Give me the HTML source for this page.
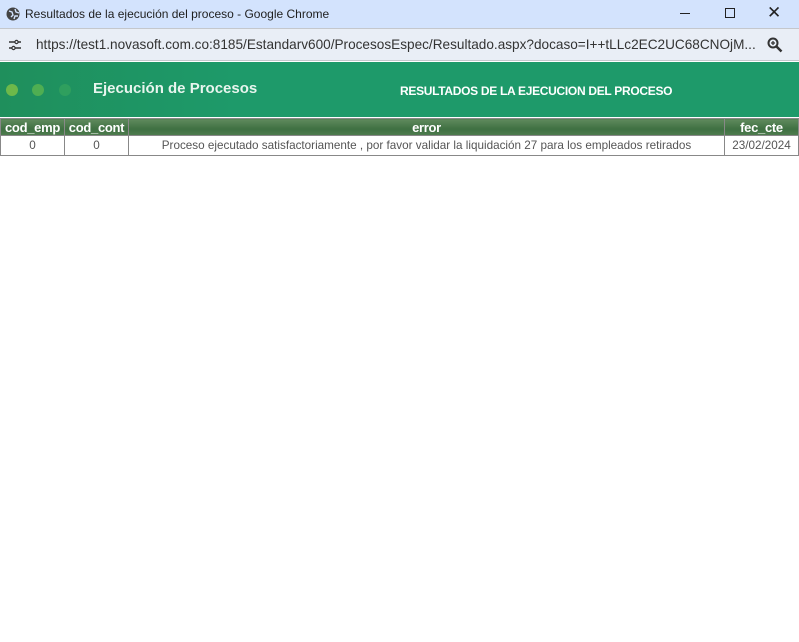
<!DOCTYPE html>
<html><head><meta charset="utf-8"><style>
*{margin:0;padding:0;box-sizing:border-box}
body{width:799px;height:642px;background:#fff;font-family:"Liberation Sans",sans-serif;overflow:hidden;position:relative}
.title{position:absolute;left:0;top:0;width:799px;height:28px;background:#d3e3fd;font-size:12px;color:#1f1f1f}
.title span{position:absolute;left:25px;top:7px}
.addr{position:absolute;left:0;top:28px;width:799px;height:33px;background:#e9eef6;border-top:1px solid #c4c7cc;border-bottom:1px solid #c4c7cc}
.addr span{position:absolute;left:36px;top:8px;font-size:13.6px;color:#333;white-space:nowrap}
.banner{position:absolute;left:0;top:62px;width:799px;height:55px;background:linear-gradient(90deg,#1f8f5c,#1e9a6a 30%,#1e9a6a)}
.dot{position:absolute;top:22px;width:12px;height:12px;border-radius:50%}
table{position:absolute;left:0;top:118px;width:799px;border-collapse:collapse}
th{height:17px;background:linear-gradient(#5f8a5d,#3f7042 60%,#4f7d4f);color:#fff;font-size:13px;font-weight:bold;border:1px solid #888;padding:0;letter-spacing:-0.3px}
td{height:20px;font-size:11.7px;color:#555;text-align:center;border:1px solid #888;padding:0}
</style></head><body>
<div class="title">
<svg style="position:absolute;left:6px;top:7px" width="14" height="14" viewBox="0 0 14 14"><circle cx="7" cy="7" r="6.5" fill="#444"/><path d="M3 4l3 1 1 3-2 2M9 2l1 3 3 1M8 12l1-3 3 0" stroke="#d3e3fd" stroke-width="1.4" fill="none"/></svg>
<span>Resultados de la ejecución del proceso - Google Chrome</span>
<div style="position:absolute;left:680px;top:13px;width:10px;height:1px;background:#222"></div>
<div style="position:absolute;left:725px;top:8px;width:10px;height:10px;border:1px solid #222"></div>
<div style="position:absolute;left:767px;top:3px;font-size:17px;color:#222">✕</div>
</div>
<div class="addr">
<svg style="position:absolute;left:8px;top:10px" width="14" height="12" viewBox="0 0 14 12"><path d="M1 3h6M10 3h3M1 9h3M7 9h6" stroke="#333" stroke-width="1.5"/><circle cx="8.5" cy="3" r="1.6" fill="none" stroke="#333" stroke-width="1.2"/><circle cx="5.5" cy="9" r="1.6" fill="none" stroke="#333" stroke-width="1.2"/></svg>
<span>https://test1.novasoft.com.co:8185/Estandarv600/ProcesosEspec/Resultado.aspx?docaso=I++tLLc2EC2UC68CNOjM...</span>
<svg style="position:absolute;left:767px;top:8px" width="16" height="16" viewBox="0 0 16 16"><circle cx="6" cy="6" r="4.5" fill="none" stroke="#333" stroke-width="2"/><path d="M9.5 9.5l5 5" stroke="#333" stroke-width="2.5"/><path d="M4 6h4M6 4v4" stroke="#333" stroke-width="1.3"/></svg>
</div>
<div class="banner">
<div class="dot" style="left:6px;background:#6db84a"></div>
<div class="dot" style="left:32px;background:#4fae52"></div>
<div class="dot" style="left:59px;background:#2f9f5e"></div>
<div style="position:absolute;left:93px;top:18px;font-size:15px;font-weight:bold;color:#e8f5ee">Ejecución de Procesos</div>
<div style="position:absolute;left:400px;top:22px;font-size:12px;font-weight:bold;color:#fff;letter-spacing:-0.3px">RESULTADOS DE LA EJECUCION DEL PROCESO</div>
</div>
<table><tr><th style="width:64px">cod_emp</th><th style="width:64px">cod_cont</th><th>error</th><th style="width:74px">fec_cte</th></tr>
<tr><td>0</td><td>0</td><td>Proceso ejecutado satisfactoriamente , por favor validar la liquidación 27 para los empleados retirados</td><td>23/02/2024</td></tr></table>
</body></html>
